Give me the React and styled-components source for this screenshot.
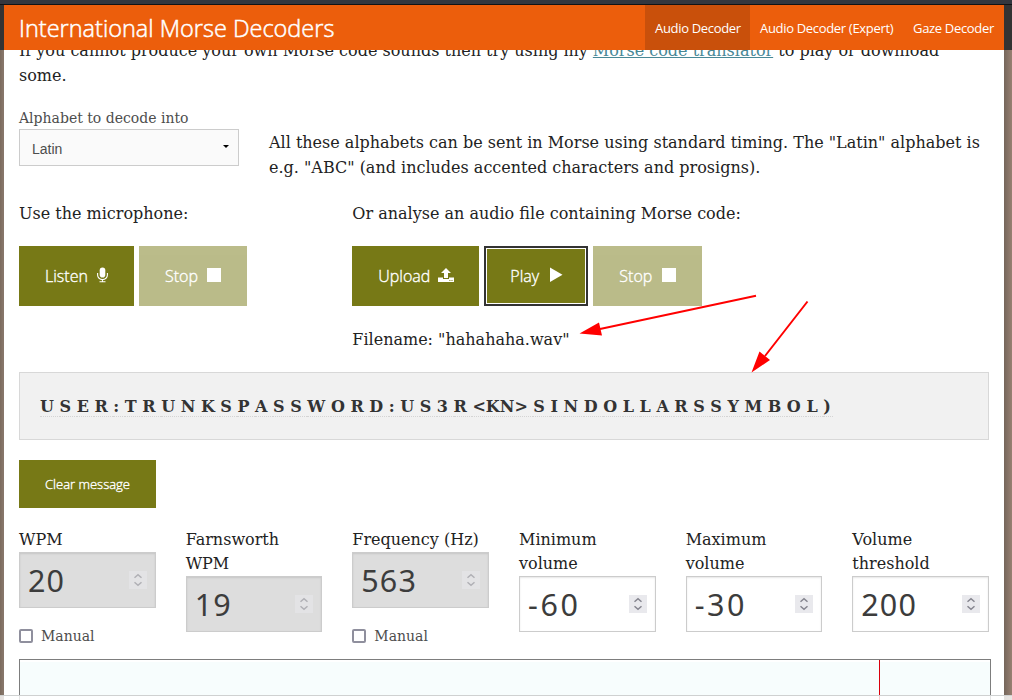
import React from 'react';
import styled, { createGlobalStyle } from 'styled-components';

const GlobalStyle = createGlobalStyle`
  *, *::before, *::after { box-sizing: border-box; }
  html, body { margin: 0; height: 700px; overflow: hidden; }
  body { font: 16px/25px "DejaVu Serif", serif; color: #222; }
`;
const sans = '"Open Sans", "Noto Sans", sans-serif';

const Page = styled.div`
  position: relative;
  height: 700px;
  overflow: hidden;
  background: linear-gradient(90deg, #7b6a5d 0, #87766a 3px, #87766a 50%, #75665b 1004px, #978071 1012px);
`;
const BrowserEdge = styled.div`
  height: 5px;
  background: #33373f;
  border-bottom: 1px solid #111316;
`;
const HeaderBand = styled.div`
  position: relative;
  z-index: 1;
  height: 45px;
  padding: 0 8px 0 4px;
  background: #333;
`;
const Header = styled.header`
  display: flex;
  justify-content: space-between;
  height: 45px;
  padding-left: 15px;
  background: #ec5e0c;
  color: #fff;
  font-family: ${sans};
`;
const Title = styled.h1`
  margin: 0;
  font-size: 23.5px;
  font-weight: 300;
  line-height: 47px;
  white-space: nowrap;
  -webkit-text-stroke: 0.5px #fff;
`;
const Nav = styled.nav`
  display: flex;
`;
const NavItem = styled.a`
  width: ${p => p.$w}px;
  padding-left: 10px;
  font-size: 13px;
  line-height: 46px;
  letter-spacing: -0.32px;
  white-space: nowrap;
  background: ${p => (p.$active ? '#c9500b' : 'transparent')};
`;
const Sheet = styled.main`
  width: 1000px;
  height: 670px;
  margin-left: 4px;
  padding: 0 15px;
  background: #fff;
`;
const Intro = styled.p`
  margin: -12px 0 20px;
  height: 50px;
  white-space: nowrap;
`;
const Link = styled.a`
  color: #488896;
  text-decoration: underline;
`;
const AlphabetRow = styled.div`
  display: grid;
  grid-template-columns: 220px 1fr;
  column-gap: 30px;
  height: 93px;
`;
const Label = styled.label`
  display: block;
  height: 21px;
  color: #4d4d4d;
  font-size: 14px;
  line-height: 20px;
  white-space: nowrap;
`;
const Select = styled.div`
  display: flex;
  align-items: center;
  justify-content: space-between;
  height: 37px;
  padding: 2px 9px 0 12px;
  border: 1px solid #ccc;
  background: #fafafa;
  color: #4d4d4d;
  font: 14px "Liberation Sans", sans-serif;
`;
const Caret = styled.i`
  border: solid transparent;
  border-width: 3px 3px 0;
  border-top-color: #000;
  margin-bottom: 4px;
`;
const Explanation = styled.p`
  margin: 22px 0 0;
  white-space: nowrap;
`;
const Columns = styled.div`
  display: grid;
  grid-template-columns: repeat(6, 1fr);
  column-gap: 30px;
`;
const Source = styled.section`
  grid-column: span ${p => p.$span};
  height: 171px;
  white-space: nowrap;
`;
const Line = styled.p`
  margin: 0;
  line-height: 25px;
`;
const ButtonRow = styled.div`
  display: flex;
  gap: 5px;
  margin: 20px 0 21px;
`;
const Button = styled.button`
  display: flex;
  align-items: center;
  flex: none;
  width: ${p => p.$w}px;
  height: ${p => p.$h || 60}px;
  margin: 0;
  padding: 0 0 0 26px;
  border: 0;
  background: #777916;
  color: #fff;
  font: ${p => p.$size || 16}px ${sans};
  font-weight: 300;
  -webkit-text-stroke: 0.35px #fff;
  opacity: ${p => (p.$disabled ? 0.5 : 1)};
  ${p => p.$focus && 'outline: 2px solid #333; outline-offset: -2px; box-shadow: inset 0 0 0 3px #fff;'}
  svg { display: block; margin: -3px 25px 0 auto; }
`;
const Message = styled.div`
  height: 68px;
  margin-bottom: 20px;
  padding: 21px 20px;
  border: 1px solid #d8d8d8;
  background: #f1f1f1;
  color: #333;
  font-weight: 700;
  white-space: pre;
`;
const Glyph = styled.span`
  display: inline-block;
  height: 23px;
  border-bottom: 1px dotted #d4d4d4;
  &:last-child { width: 10px; }
`;
const Fields = styled(Columns)`
  margin-top: 19px;
  height: 132px;
  line-height: 24px;
  padding-top: 1px;
`;
const NumberBox = styled.div`
  display: flex;
  align-items: center;
  justify-content: space-between;
  height: 56px;
  margin-bottom: 16px;
  padding: 0 8px;
  border: 1px solid #ccc;
  background: ${p => (p.$disabled ? '#ddd' : '#fff')};
  box-shadow: inset 0 1px 2px rgba(0, 0, 0, 0.1);
  color: #3c3c3c;
  font: 30.5px "Noto Sans", sans-serif;
  letter-spacing: ${p => (p.$negative ? 2.6 : 1.1)}px;
`;
const Spinner = styled.span`
  display: flex;
  width: 18px;
  height: 18px;
  background: #e9e9ed;
  opacity: ${p => (p.$disabled ? 0.5 : 1)};
`;
const Manual = styled.label`
  display: flex;
  align-items: center;
  gap: 8px;
  height: 24px;
  color: #4d4d4d;
  font-size: 14px;
`;
const Check = styled.i`
  width: 14px;
  height: 14px;
  border: 2px solid #8f8f9d;
  border-radius: 2px;
`;
const Canvas = styled.div`
  display: flex;
  width: 972px;
  height: 60px;
  padding-top: 2px;
  border: 1px solid #7d7d7d;
  background: #f7fdfd content-box;
`;
const Marker = styled.i`
  width: 1px;
  height: 60px;
  margin: -2px 0 0 859px;
  background: #d9000d;
`;
const StatusEdge = styled.div`
  position: absolute;
  left: 0;
  right: 0;
  bottom: 0;
  height: 5px;
  border-top: 1px solid #cfd1d1;
  background: rgba(255, 255, 255, 0.8);
`;
const Arrows = styled.svg`
  position: absolute;
  left: 570px;
  top: 285px;
`;

const Mic = () => (
  <svg width="12" height="16" viewBox="0 0 12 16" fill="#fff">
    <rect x="2.7" y="0.5" width="5.6" height="10" rx="2.8" />
    <path d="M.6 6v2a4.9 4.6 0 0 0 9.8 0V6M5.5 12.5V15M2.5 14.8h6" fill="none" stroke="#fff" strokeWidth="1.1" />
  </svg>
);
const Square = () => <svg width="15" height="16"><path d="M0 1h14v14H0z" fill="#fff" /></svg>;
const PlayIcon = () => <svg width="13" height="16"><path d="M0 .5v14.5L12.5 7.8z" fill="#fff" /></svg>;
const UploadIcon = () => (
  <svg width="16" height="16" viewBox="0 0 16 16" fill="#fff" fillRule="evenodd">
    <path d="M8 1l5 5H10v5H6V6H3zM0 10.6h5v1.5h6v-1.5h5V15H0zM11.4 13v1h1v-1zM13.5 13v1h1v-1z" />
  </svg>
);
const UpDown = () => (
  <svg width="18" height="18" fill="none" stroke="#85858f" strokeWidth="1.5">
    <path d="M5.5 6.7L9 3.7l3.5 3M5.5 11.3l3.5 3 3.5-3" />
  </svg>
);

const message = [...'USER:TRUNKSPASSWORD:US3R', '<KN>', ...'SINDOLLARSSYMBOL)'];
const fields = [
  { label: ['WPM'], value: '20', disabled: true, manual: true },
  { label: ['Farnsworth', 'WPM'], value: '19', disabled: true },
  { label: ['Frequency (Hz)'], value: '563', disabled: true, manual: true },
  { label: ['Minimum', 'volume'], value: '-60' },
  { label: ['Maximum', 'volume'], value: '-30' },
  { label: ['Volume', 'threshold'], value: '200' },
];

export default function App() {
  return (
    <Page>
      <GlobalStyle />
      <BrowserEdge />
      <HeaderBand>
        <Header>
          <Title>International Morse Decoders</Title>
          <Nav>
            <NavItem $active $w={105}>Audio Decoder</NavItem>
            <NavItem $w={153}>Audio Decoder (Expert)</NavItem>
            <NavItem $w={101}>Gaze Decoder</NavItem>
          </Nav>
        </Header>
      </HeaderBand>
      <Sheet>
        <Intro>
          If you cannot produce your own Morse code sounds then try using my <Link>Morse code translator</Link> to play or download<br />some.
        </Intro>
        <AlphabetRow>
          <div>
            <Label>Alphabet to decode into</Label>
            <Select>Latin<Caret /></Select>
          </div>
          <Explanation>
            All these alphabets can be sent in Morse using standard timing. The "Latin" alphabet is<br />
            e.g. "ABC" (and includes accented characters and prosigns).
          </Explanation>
        </AlphabetRow>
        <Columns>
          <Source $span={2}>
            <Line>Use the microphone:</Line>
            <ButtonRow>
              <Button $w={115}>Listen<Mic /></Button>
              <Button $w={108} $disabled>Stop<Square /></Button>
            </ButtonRow>
          </Source>
          <Source $span={4}>
            <Line>Or analyse an audio file containing Morse code:</Line>
            <ButtonRow>
              <Button $w={127}>Upload<UploadIcon /></Button>
              <Button $w={104} $focus>Play<PlayIcon /></Button>
              <Button $w={109} $disabled>Stop<Square /></Button>
            </ButtonRow>
            <Line>Filename: "hahahaha.wav"</Line>
          </Source>
        </Columns>
        <Message>{message.map((c, i) => <Glyph key={i}>{c + ' '}</Glyph>)}</Message>
        <Button $w={137} $h={48} $size={13}>Clear message</Button>
        <Fields>
          {fields.map((f, i) => (
            <div key={i}>
              {f.label.map(l => <div key={l}>{l}</div>)}
              <NumberBox $disabled={f.disabled} $negative={f.value.startsWith('-')}>
                {f.value}
                <Spinner $disabled={f.disabled}><UpDown /></Spinner>
              </NumberBox>
              {f.manual && <Manual><Check />Manual</Manual>}
            </div>
          ))}
        </Fields>
        <Canvas><Marker /></Canvas>
      </Sheet>
      <Arrows width="250" height="95" stroke="red" fill="red">
        <path d="M186 10.7L30 44M237.5 16.5L195 71" strokeWidth="2" fill="none" />
        <path d="M9.5 48.5L29 37.5 32 50.5zM181.5 87.5L189.5 66.5 200 75z" stroke="none" />
      </Arrows>
      <StatusEdge />
    </Page>
  );
}
